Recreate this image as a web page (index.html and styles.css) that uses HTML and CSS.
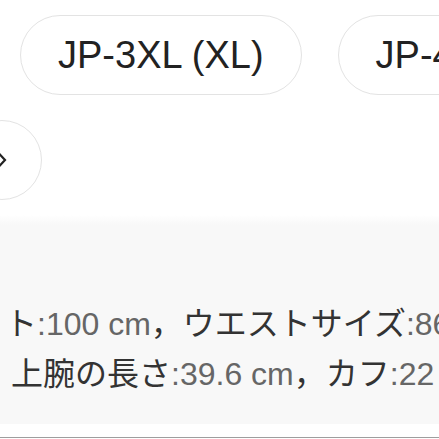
FILE: index.html
```html
<!DOCTYPE html>
<html lang="ja">
<head>
<meta charset="utf-8">
<link rel="stylesheet" href="styles.css">
</head>
<body>
<div class="page">
  <div class="sizes">
    <div class="pill">JP-3XL (XL)</div>
    <div class="pill">JP-4XL (XXL)</div>
  </div>
  <div class="more-row">
    <div class="circle-btn">
      <svg class="chev" width="12" height="18" viewBox="0 0 12 18"><path d="M2 1.5 L9 9 L2 16.5" fill="none" stroke="#222" stroke-width="2.2"/></svg>
    </div>
  </div>
  <div class="details">
    <div class="line l1"><span class="k">ト</span><span class="v">:100 cm</span><span class="k">，</span><span class="k">ウエストサイズ</span><span class="v">:86 cm</span></div>
    <div class="line l2"><span class="k">上腕の長さ</span><span class="v">:39.6 cm</span><span class="k">，</span><span class="k">カフ</span><span class="v">:22 cm</span></div>
  </div>
  <div class="footer-gap"></div>
  <div class="rule"></div>
</div>
</body>
</html>
```

FILE: styles.css
```css
html, body {
  margin: 0;
  padding: 0;
  background: #ffffff;
}
.page {
  width: 439px;
  height: 439px;
  overflow: hidden;
  font-family: "Liberation Sans", Arial, "Noto Sans CJK JP", sans-serif;
}
.sizes {
  display: flex;
  gap: 36px;
  padding: 15px 0 0 20px;
  white-space: nowrap;
}
.pill {
  flex: none;
  height: 78px;
  border: 1px solid #e3e3e3;
  border-radius: 40px;
  padding: 0 37px;
  display: flex;
  align-items: center;
  font-size: 38px;
  color: #222;
}
.more-row {
  padding-top: 25px;
}
.circle-btn {
  width: 78px;
  height: 78px;
  margin-left: -38px;
  border: 1px solid #e3e3e3;
  border-radius: 50%;
  display: flex;
  align-items: center;
  justify-content: center;
}
.chev {
  display: block;
}
.details {
  margin-top: 15px;
  height: 209px;
  box-sizing: border-box;
  padding-top: 81px;
  background: linear-gradient(#ffffff 0px, #f8f8f8 10px, #f8f8f8 100%);
}
.line {
  height: 50px;
  line-height: 50px;
  font-size: 32px;
  white-space: nowrap;
}
.l1 {
  margin-left: 5px;
}
.l2 {
  margin-left: 11px;
}
.k {
  color: #333;
  font-family: "Noto Sans CJK JP", sans-serif;
}
.v {
  color: #666;
}
.footer-gap {
  height: 13px;
}
.rule {
  height: 1px;
  background: #9e9e9e;
}
```
